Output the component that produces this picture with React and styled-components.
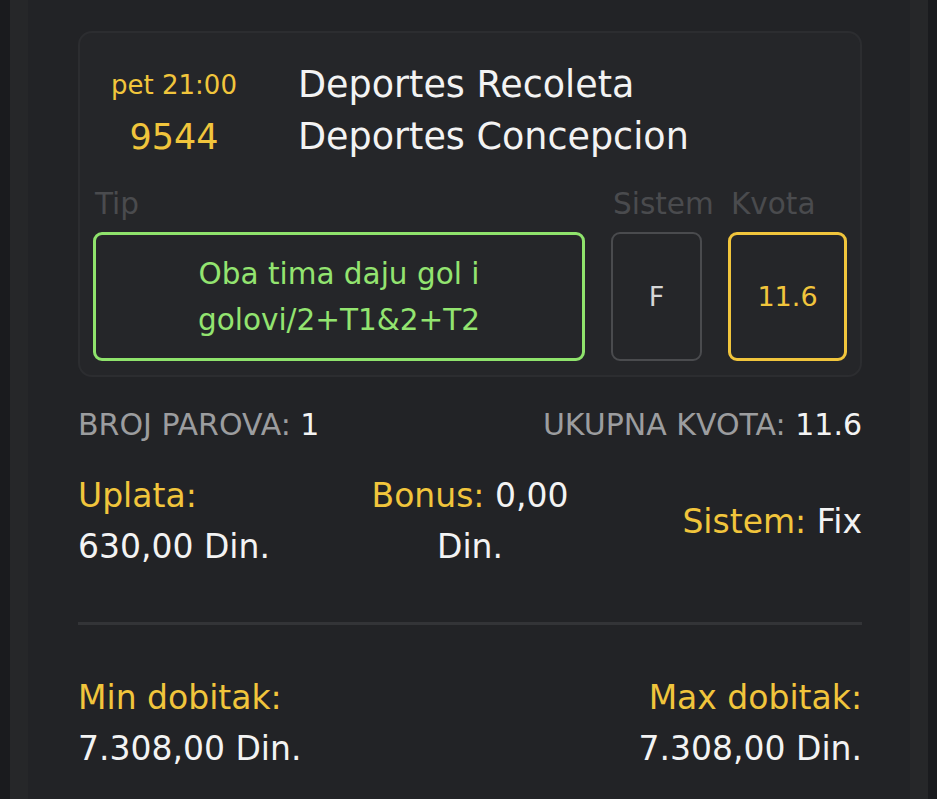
import React from "react";
import styled, { createGlobalStyle } from "styled-components";

const Global = createGlobalStyle`
  html, body { margin: 0; padding: 0; background: #1a1b1e; }
  body { font-family: "DejaVu Sans", "Liberation Sans", sans-serif; }
  * { box-sizing: border-box; }
`;

const Frame = styled.div`
  margin: 0 9px 0 10px;
  min-height: 100vh;
  background: #262729;
  padding: 0 18px;
`;

const Panel = styled.div`
  min-height: 100vh;
  background: #222326;
  padding: 31px 48px 30px 50px;
`;

const Card = styled.div`
  background: #252629;
  border: 2px solid #2c2d30;
  border-radius: 14px;
  padding: 26px 13px 14px 13px;
`;

const Header = styled.div`
  display: grid;
  grid-template-columns: 162px 1fr;
  column-gap: 43px;
  align-items: center;
`;

const Meta = styled.div`
  color: #f1c53c;
  text-align: center;
  font-size: ${(p) => p.$size}px;
  line-height: 52px;
  white-space: nowrap;
`;

const Team = styled.div`
  color: #f3f3f3;
  font-size: 36.5px;
  line-height: 52px;
  white-space: nowrap;
`;

const PickGrid = styled.div`
  display: grid;
  grid-template-columns: 492px 91px 119px;
  column-gap: 26px;
  margin-top: 23px;
`;

const Label = styled.div`
  color: #4a4b4e;
  font-size: 29.5px;
  line-height: 36px;
  white-space: nowrap;
  padding-left: ${(p) => p.$indent || 2}px;
  margin-bottom: 10px;
`;

const Box = styled.div`
  height: 129px;
  border: ${(p) => p.$bw || 3}px solid ${(p) => p.$border};
  border-radius: 9px;
  display: flex;
  flex-direction: column;
  align-items: center;
  justify-content: center;
  color: ${(p) => p.$color};
  font-size: ${(p) => p.$size}px;
  line-height: 46px;
  text-align: center;
`;

const CountRow = styled.div`
  display: flex;
  justify-content: space-between;
  margin-top: 28px;
  font-size: 30px;
  line-height: 40px;
  color: #9c9d9f;
  white-space: nowrap;
`;

const White = styled.span`
  color: #f3f3f3;
`;

const Gold = styled.span`
  color: #f1c53c;
`;

const Summary = styled.div`
  display: grid;
  grid-template-columns: repeat(${(p) => p.$cols}, 1fr);
  align-items: center;
  margin-top: ${(p) => p.$top}px;
  font-size: 33px;
  line-height: 51px;
  color: #f3f3f3;
`;

const Cell = styled.div`
  text-align: ${(p) => p.$align};
  white-space: nowrap;
`;

const Line = styled.div``;

const Divider = styled.div`
  height: 3px;
  background: #333437;
  margin-top: 50px;
`;

export default function App() {
  return (
    <>
      <Global />
      <Frame>
        <Panel>
          <Card>
            <Header>
              <Meta $size={26}>pet 21:00</Meta>
              <Team>Deportes Recoleta</Team>
              <Meta $size={35}>9544</Meta>
              <Team>Deportes Concepcion</Team>
            </Header>
            <PickGrid>
              <Label>Tip</Label>
              <Label>Sistem</Label>
              <Label $indent={3}>Kvota</Label>
              <Box $border="#8fe36c" $color="#93e470" $size={29.5}>
                <Line>Oba tima daju gol i</Line>
                <Line>golovi/2+T1&amp;2+T2</Line>
              </Box>
              <Box $border="#4a4b4e" $bw={2} $color="#d6d6d6" $size={27}>
                F
              </Box>
              <Box $border="#f1c53c" $color="#f1c53c" $size={27}>
                11.6
              </Box>
            </PickGrid>
          </Card>

          <CountRow>
            <span>
              BROJ PAROVA: <White>1</White>
            </span>
            <span>
              UKUPNA KVOTA: <White>11.6</White>
            </span>
          </CountRow>

          <Summary $cols={3} $top={25}>
            <Cell $align="left">
              <Line>
                <Gold>Uplata:</Gold>
              </Line>
              <Line>630,00 Din.</Line>
            </Cell>
            <Cell $align="center">
              <Line>
                <Gold>Bonus:</Gold> 0,00
              </Line>
              <Line>Din.</Line>
            </Cell>
            <Cell $align="right">
              <Gold>Sistem:</Gold> Fix
            </Cell>
          </Summary>

          <Divider />

          <Summary $cols={2} $top={47}>
            <Cell $align="left">
              <Line>
                <Gold>Min dobitak:</Gold>
              </Line>
              <Line>7.308,00 Din.</Line>
            </Cell>
            <Cell $align="right">
              <Line>
                <Gold>Max dobitak:</Gold>
              </Line>
              <Line>7.308,00 Din.</Line>
            </Cell>
          </Summary>
        </Panel>
      </Frame>
    </>
  );
}
